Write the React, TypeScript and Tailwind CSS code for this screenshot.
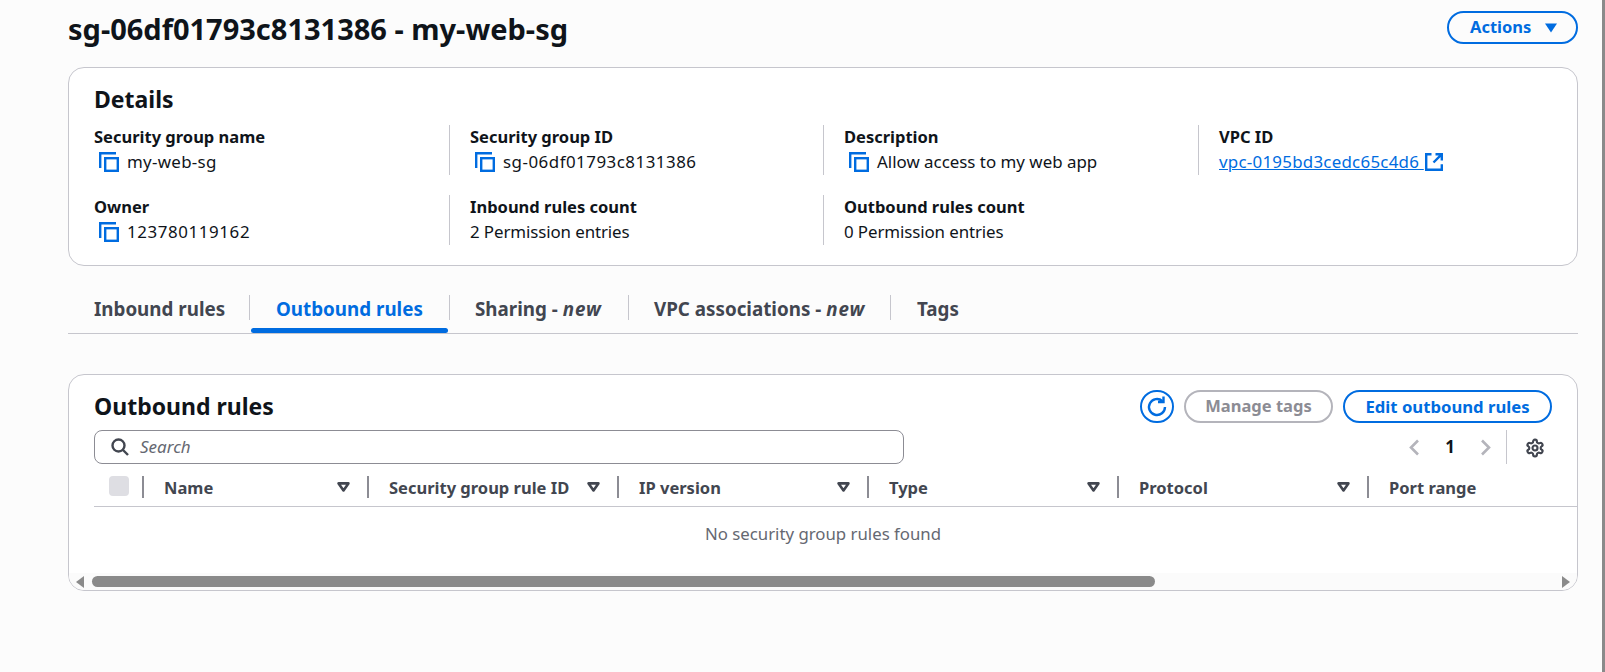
import React from "react";

const BLUE = "#006ce0";

function Copy() {
  return (
    <svg width="20" height="20" viewBox="0 0 20 20" fill="none" stroke={BLUE} strokeWidth="2.4" className="shrink-0">
      <path d="M1.2 16V1.2H17" />
      <rect x="6.2" y="6.2" width="12.6" height="12.6" />
    </svg>
  );
}

function External() {
  return (
    <svg width="18" height="18" viewBox="0 0 18 18" fill="none" stroke={BLUE} strokeWidth="2.4" className="shrink-0">
      <path d="M6.5 1.2H1.2v15.6h15.6v-5.5" />
      <path d="M10.5 1.2h6.3v6.3M16.8 1.2 8.5 9.5" />
    </svg>
  );
}

function Sort() {
  return (
    <svg width="13" height="10" viewBox="0 0 13 10" className="shrink-0">
      <path d="M1.6 1.4h9.8L6.5 8.4z" fill="none" stroke="#424650" strokeWidth="2.6" strokeLinejoin="round" />
    </svg>
  );
}

function Field({ label, value, copy, first, track }: { label: string; value: string; copy?: boolean; first?: boolean; track?: string }) {
  return (
    <div className={first ? "h-[50px]" : "h-[50px] border-l border-[#c6c6cd] pl-5"}>
      <div className="text-[16.5px] leading-5 font-bold text-[#0f141a] mt-[2px]">{label}</div>
      <div className={copy ? "flex items-center gap-2 pl-[5px] h-[30px] text-[16.9px] text-[#0f141a]" : "h-[30px] flex items-center text-[16.9px] text-[#0f141a]"}>
        {copy && <Copy />}
        <span className={track}>{value}</span>
      </div>
    </div>
  );
}

function Tab({ children, active, divider, w }: { children: React.ReactNode; active?: boolean; divider?: boolean; w: string }) {
  return (
    <div className={`relative h-full flex items-center shrink-0 ${w}`}>
      {divider && <div className="absolute left-0 top-[9px] h-[25px] w-px bg-[#c6c6cd]" />}
      <div className={`text-[18.8px] font-bold whitespace-nowrap ${active ? "text-[#006ce0] pl-[27px]" : "text-[#424650] pl-[26px]"}`}>{children}</div>
      {active && <div className="absolute left-[2px] right-[1px] bottom-0 h-[5px] rounded-[3px] bg-[#006ce0]" />}
    </div>
  );
}

function Col({ label, w, sort = true }: { label: string; w: string; sort?: boolean }) {
  return (
    <div className={`h-[22px] flex items-center shrink-0 ${w} border-l-2 border-[#8c8c94] pl-5 pr-[17px] justify-between`}>
      <span className="text-[16.5px] leading-[24px] pt-[2px] font-bold text-[#424650] whitespace-nowrap">{label}</span>
      {sort && <Sort />}
    </div>
  );
}

export default function App() {
  return (
    <div className="flex h-[672px] w-full overflow-hidden bg-[#fcfcfc]" style={{ fontFamily: '"Noto Sans", sans-serif' }}>
      <main className="flex-1 pl-[68px] pr-[24px] min-w-0">
        <div className="h-[67px] flex justify-between pt-[11px]">
          <h1 className="text-[29px] leading-[36px] font-bold text-[#0f141a] whitespace-nowrap">sg-06df01793c8131386 - my-web-sg</h1>
          <button className="h-[33px] w-[131px] rounded-full border-2 border-[#006ce0] flex items-center justify-start gap-[13px] text-[#006ce0] text-[16.5px] font-bold pl-[21px] bg-[#fcfcfc]">
            <span>Actions</span>
            <svg width="14" height="10" viewBox="0 0 14 10"><path d="M1 0.5h12L7 9.5z" fill={BLUE} /></svg>
          </button>
        </div>

        <section className="h-[199px] rounded-[16px] border border-[#c6c6cd] bg-white pl-[25px] pt-[15px]">
          <h2 className="text-[23px] leading-[32px] font-bold text-[#0f141a]">Details</h2>
          <div className="grid grid-cols-[355px_374px_375px_350px] gap-y-[20px] mt-[10px]">
            <Field first label="Security group name" value="my-web-sg" copy track="tracking-[0.3px]" />
            <Field label="Security group ID" value="sg-06df01793c8131386" copy track="tracking-[0.5px]" />
            <Field label="Description" value="Allow access to my web app" copy />
            <div className="h-[50px] border-l border-[#c6c6cd] pl-5">
              <div className="text-[16.5px] leading-5 font-bold text-[#0f141a] mt-[2px]">VPC ID</div>
              <div className="h-[30px] flex items-center gap-[1px] text-[16.9px] text-[#006ce0]">
                <span className="underline whitespace-pre tracking-[0.25px]">vpc-0195bd3cedc65c4d6 </span>
                <External />
              </div>
            </div>
            <Field first label="Owner" value="123780119162" copy track="tracking-[0.6px]" />
            <Field label="Inbound rules count" value="2 Permission entries" track="-tracking-[0.1px]" />
            <Field label="Outbound rules count" value="0 Permission entries" track="-tracking-[0.1px]" />
          </div>
        </section>

        <nav className="mt-[20px] h-[48px] flex border-b border-[#c6c6cd]">
          <Tab w="w-[181px]">Inbound rules</Tab>
          <Tab active divider w="w-[200px]">Outbound rules</Tab>
          <Tab divider w="w-[179px]">Sharing - <em className="tracking-[1px]">new</em></Tab>
          <Tab divider w="w-[262px]">VPC associations - <em className="tracking-[1px]">new</em></Tab>
          <Tab divider w="w-[100px]"><span className="pl-px">Tags</span></Tab>
        </nav>

        <section className="mt-[40px] h-[217px] rounded-[16px] border border-[#c6c6cd] bg-white overflow-hidden flex flex-col">
          <div className="flex justify-between pl-[25px] pr-[25px] h-[49px] pt-[15px]">
            <h2 className="text-[23px] leading-[32px] font-bold text-[#0f141a]">Outbound rules</h2>
            <div className="flex gap-[10px]">
              <button className="h-[33px] w-[34px] rounded-full border-2 border-[#006ce0] flex items-center justify-center">
                <svg width="24" height="24" viewBox="0 0 24 24" fill="none" stroke={BLUE} strokeWidth="2.4"><path d="M20 12a8 8 0 1 1-2.6-5.9" /><path d="M18.5 1.5v5.5h-5.5" /></svg>
              </button>
              <button className="h-[33px] w-[149px] rounded-full border-2 border-[#b4b4bb] text-[#8c8c94] text-[16.5px] font-bold">Manage tags</button>
              <button className="h-[33px] w-[209px] rounded-full border-2 border-[#006ce0] text-[#006ce0] text-[16.7px] font-bold">Edit outbound rules</button>
            </div>
          </div>

          <div className="flex items-center pl-[25px] pr-[32px] h-[34px] mt-[6px]">
            <div className="w-[810px] h-[34px] rounded-[8px] border border-[#8c8c94] flex items-center pl-4 gap-[11px]">
              <svg width="18" height="18" viewBox="0 0 18 18" fill="none" stroke="#424650" strokeWidth="2.4"><circle cx="7.5" cy="7.5" r="6" /><path d="M12 12l5 5" /></svg>
              <span className="italic text-[17px] text-[#656871]">Search</span>
            </div>
            <div className="flex items-center ml-auto">
              <svg width="12" height="17" viewBox="0 0 12 17" fill="none" stroke="#b4b4bb" strokeWidth="2.6"><path d="M10 1.5 3 8.5l7 7" /></svg>
              <span className="w-[60px] text-center text-[16.9px] font-bold text-[#0f141a]">1</span>
              <svg width="12" height="17" viewBox="0 0 12 17" fill="none" stroke="#b4b4bb" strokeWidth="2.6"><path d="M2 1.5 9 8.5l-7 7" /></svg>
              <div className="w-px h-[34px] bg-[#c6c6cd] ml-[14px] mr-[18px]" />
              <svg width="20" height="20" viewBox="0 0 24 24" fill="none" stroke="#424650" strokeWidth="2.6" strokeLinejoin="round" className="mt-px"><path d="M12.22 2h-.44a2 2 0 0 0-2 2v.18a2 2 0 0 1-1 1.73l-.43.25a2 2 0 0 1-2 0l-.15-.08a2 2 0 0 0-2.73.73l-.22.38a2 2 0 0 0 .73 2.73l.15.1a2 2 0 0 1 1 1.72v.51a2 2 0 0 1-1 1.74l-.15.09a2 2 0 0 0-.73 2.73l.22.38a2 2 0 0 0 2.73.73l.15-.08a2 2 0 0 1 2 0l.43.25a2 2 0 0 1 1 1.73V20a2 2 0 0 0 2 2h.44a2 2 0 0 0 2-2v-.18a2 2 0 0 1 1-1.73l.43-.25a2 2 0 0 1 2 0l.15.08a2 2 0 0 0 2.73-.73l.22-.39a2 2 0 0 0-.73-2.73l-.15-.08a2 2 0 0 1-1-1.74v-.5a2 2 0 0 1 1-1.74l.15-.09a2 2 0 0 0 .73-2.73l-.22-.38a2 2 0 0 0-2.73-.73l-.15.08a2 2 0 0 1-2 0l-.43-.25a2 2 0 0 1-1-1.73V4a2 2 0 0 0-2-2z" /><circle cx="12" cy="12" r="3" /></svg>
            </div>
          </div>

          <div className="ml-[25px] h-[43px] border-b border-[#c6c6cd] flex items-start pt-[12px] overflow-hidden">
            <div className="w-[15px] shrink-0" />
            <div className="w-[20px] h-[20px] rounded-[4px] bg-[#dedee3] shrink-0" />
            <div className="w-[13px] shrink-0" />
            <Col label="Name" w="w-[225px]" />
            <Col label="Security group rule ID" w="w-[250px]" />
            <Col label="IP version" w="w-[250px]" />
            <Col label="Type" w="w-[250px]" />
            <Col label="Protocol" w="w-[250px]" />
            <Col label="Port range" w="w-[210px]" sort={false} />
          </div>

          <div className="flex-1 flex items-start justify-center pt-[17px] text-[16.8px] leading-5 text-[#656871]">No security group rules found</div>

          <div className="h-[17px] bg-[#fbfbfb] flex items-center shrink-0">
            <svg width="8" height="12" viewBox="0 0 8 12" className="ml-[7px] shrink-0"><path d="M8 0v12L0 6z" fill="#8a8a8a" /></svg>
            <div className="ml-[8px] w-[1063px] h-[11px] rounded-full bg-[#8a8a8a] shrink-0" />
            <svg width="8" height="12" viewBox="0 0 8 12" className="ml-auto mr-[7px] shrink-0"><path d="M0 0v12l8-6z" fill="#8a8a8a" /></svg>
          </div>
        </section>
      </main>
      <div className="w-[3px] bg-[#8a8a8a] shrink-0" />
    </div>
  );
}
